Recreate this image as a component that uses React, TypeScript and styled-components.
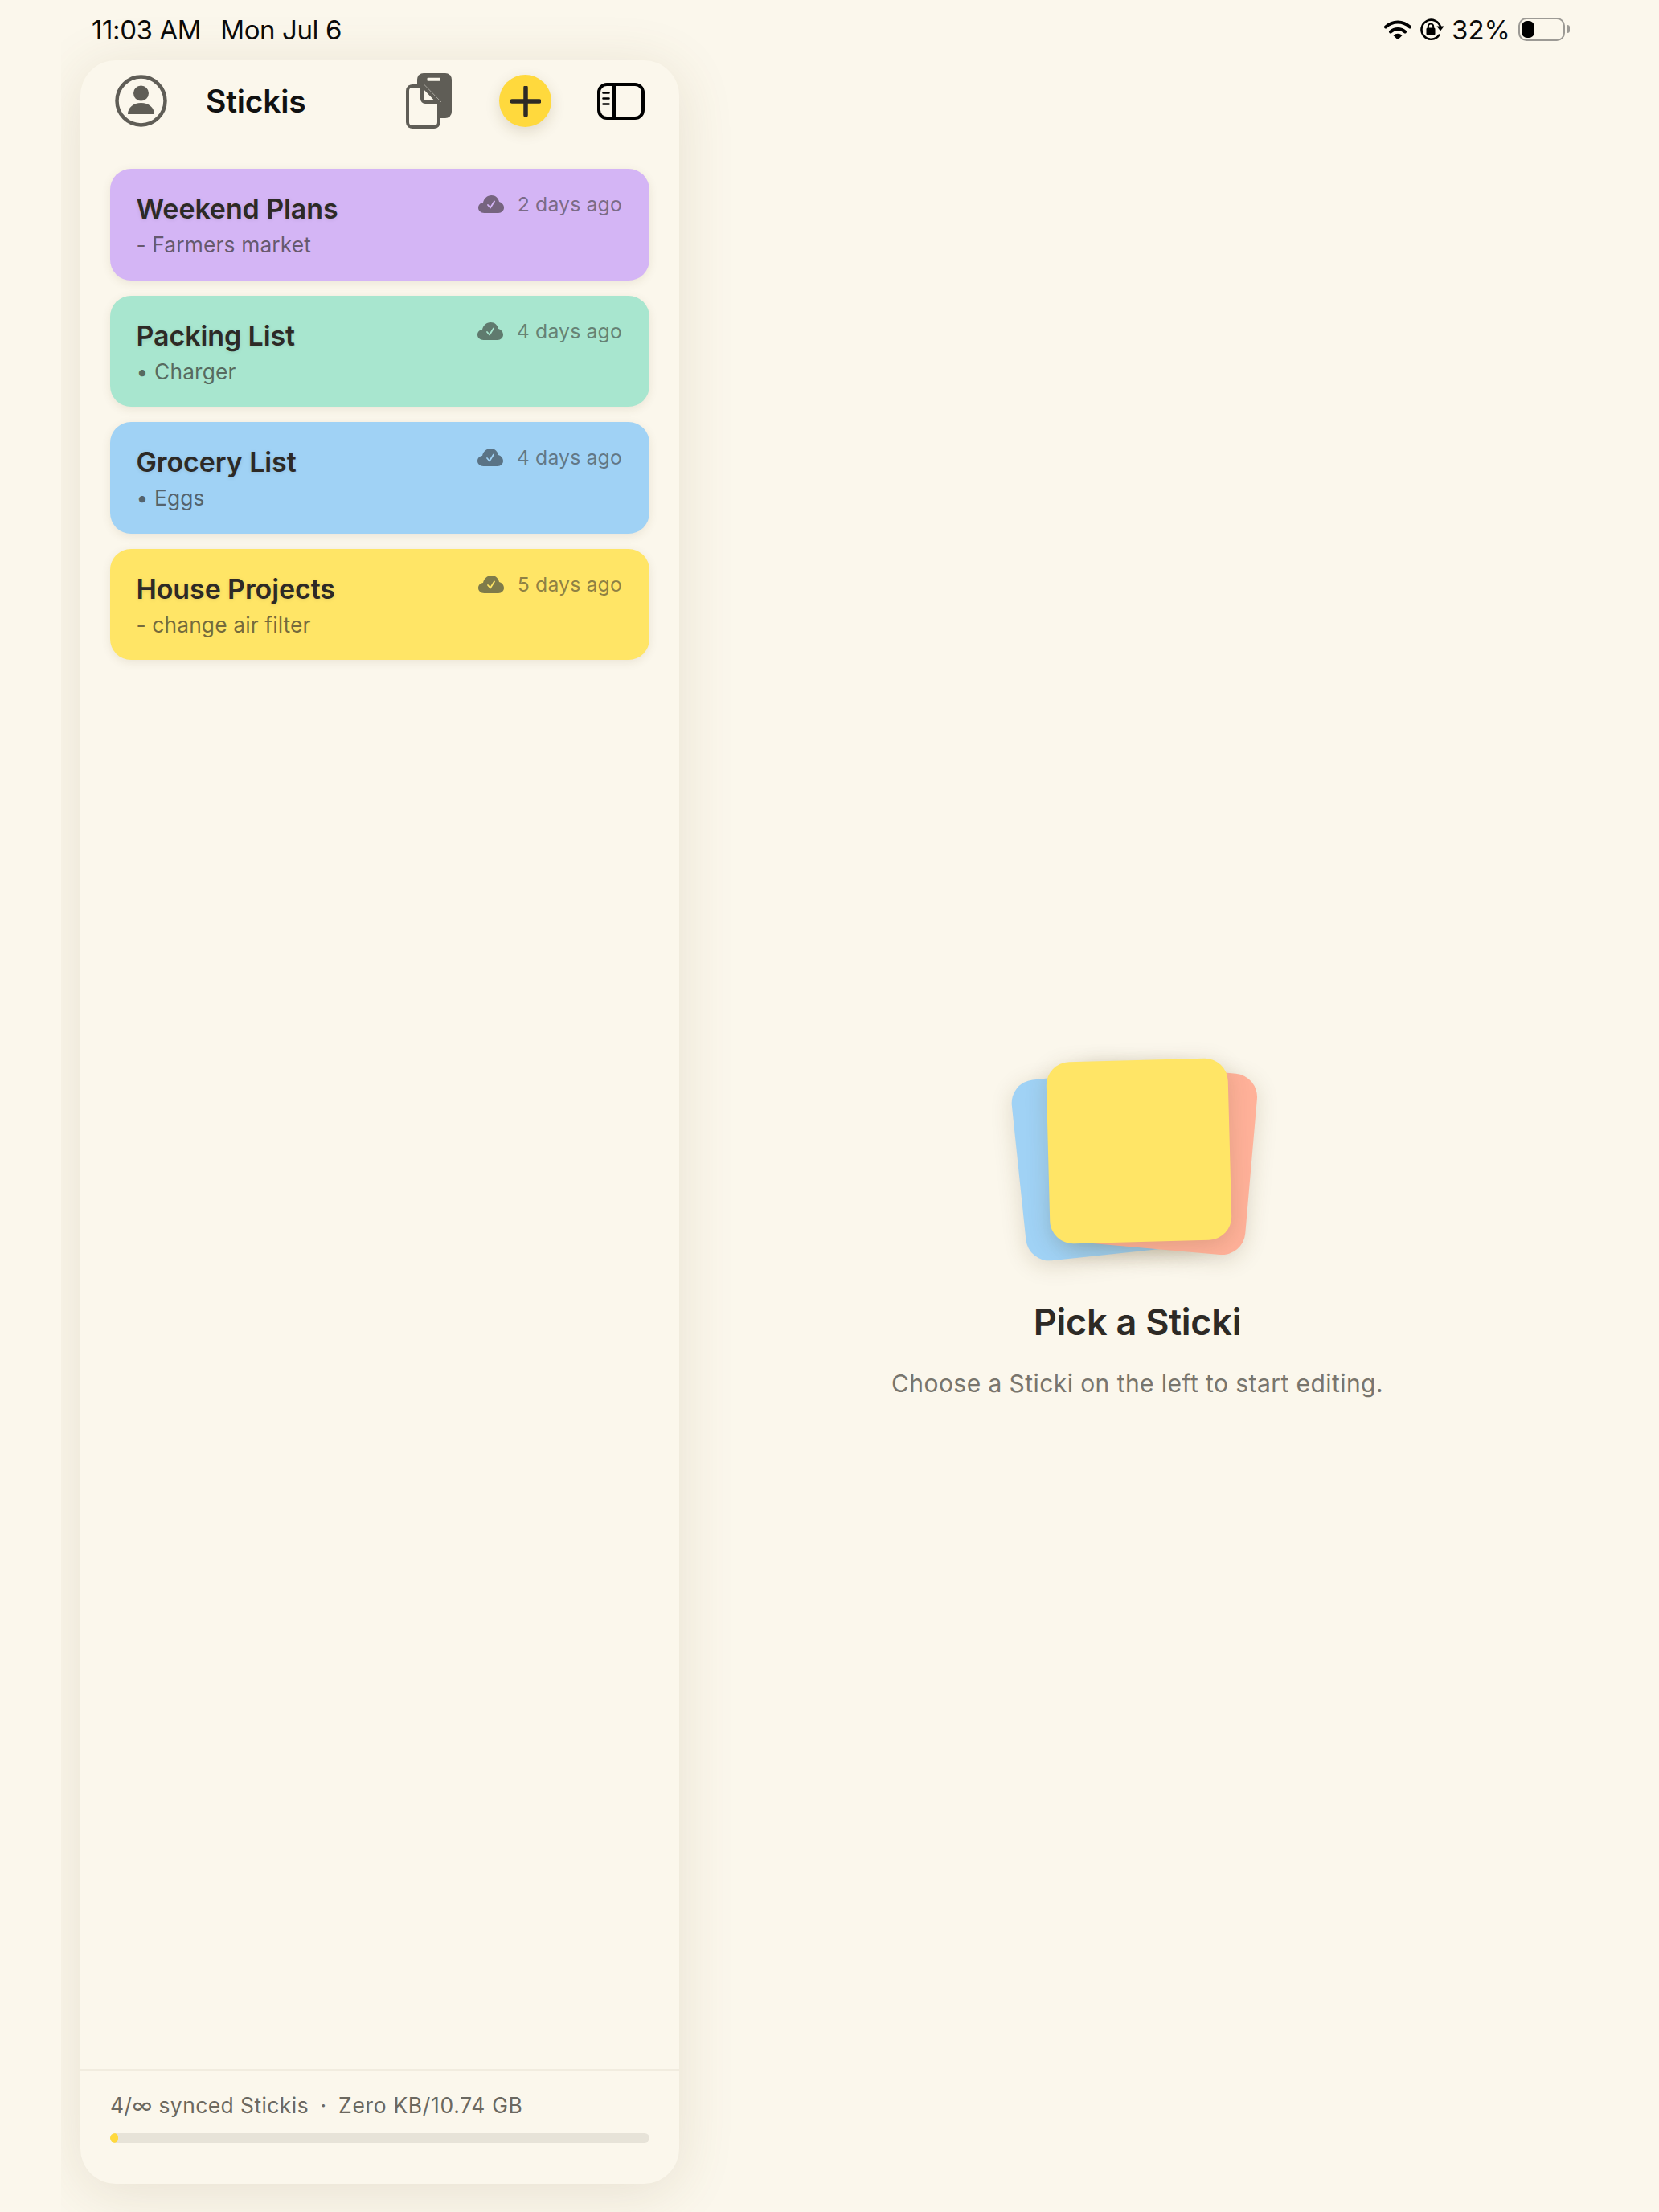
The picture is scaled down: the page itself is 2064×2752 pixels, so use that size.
import React from 'react';
import styled, { createGlobalStyle } from 'styled-components';

const GlobalStyle = createGlobalStyle`
    html, body {
        margin: 0;
        padding: 0;
        background: #fbf7ec;
    }
    * {
        box-sizing: border-box;
    }
`;

const Page = styled.div`
    width: 2064px;
    height: 2752px;
    overflow: hidden;
    background: #fbf7ec;
    font-family: Inter, 'Noto Sans', sans-serif;
    display: flex;
    flex-direction: column;
`;

const StatusBar = styled.div`
    height: 75px;
    flex: none;
    display: flex;
    align-items: center;
    padding: 0 117px 2px 114px;
    color: #0b0b0b;
    font-size: 33px;
    font-weight: 400;
`;
const StatusClock = styled.span`
    display: flex;
    gap: 24px;
    letter-spacing: -0.4px;
`;
const StatusIcons = styled.div`
    margin-left: auto;
    display: flex;
    align-items: center;
    gap: 10px;
`;
const Battery = styled.div`
    position: relative;
    width: 58px;
    height: 29px;
    border: 2.5px solid #9c9a95;
    border-radius: 10px;
    padding: 2px;
    &::after {
        content: '';
        position: absolute;
        right: -8px;
        top: 7px;
        width: 3px;
        height: 10px;
        border-radius: 0 3px 3px 0;
        background: #9c9a95;
    }
`;
const BatteryFill = styled.div`
    height: 100%;
    border-radius: 7px;
    background: #000;
`;

const Body = styled.div`
    flex: 1;
    display: flex;
    min-height: 0;
`;

const Panel = styled.aside`
    width: 745px;
    height: 2642px;
    margin-left: 100px;
    flex: none;
    display: flex;
    flex-direction: column;
    background: #fbf7ec;
    border-radius: 44px;
    box-shadow: 0 10px 70px rgba(110, 90, 40, 0.14);
    clip-path: inset(-70px -90px -60px -24px);
`;
const Header = styled.header`
    display: flex;
    align-items: center;
    height: 65px;
    margin-top: 18px;
    padding: 0 43px;
    flex: none;
`;
const AppTitle = styled.h1`
    margin: 0 0 0 48px;
    font-size: 39px;
    font-weight: 600;
    letter-spacing: -0.2px;
    color: #111;
`;
const HeaderActions = styled.div`
    margin-left: auto;
    display: flex;
    align-items: center;
    gap: 57px;
`;
const IconBox = styled.div`
    display: flex;
`;
const AddButton = styled.div`
    width: 65px;
    height: 65px;
    margin-left: 2px;
    border-radius: 50%;
    background: #ffd93d;
    box-shadow: 0 6px 18px rgba(90, 70, 20, 0.16);
    display: flex;
    align-items: center;
    justify-content: center;
`;

const StickiList = styled.div`
    flex: 1;
    display: flex;
    flex-direction: column;
    gap: 19px;
    padding: 52px 37px 0 37px;
`;
const Card = styled.div<{ $color: string }>`
    height: 138.5px;
    border-radius: 26px;
    background: ${(p) => p.$color};
    padding: 28px 34px 0 32.5px;
    box-shadow: 0 3px 12px rgba(90, 70, 30, 0.1);
    display: flex;
    justify-content: space-between;
`;
const CardText = styled.div`
    display: flex;
    flex-direction: column;
    gap: 6px;
`;
const CardTitle = styled.div`
    font-size: 34px;
    line-height: 44px;
    font-weight: 560;
    letter-spacing: -0.1px;
    color: #2d2a26;
    text-shadow: 0 1px 5px rgba(0, 0, 0, 0.1);
`;
const CardPreview = styled.div`
    font-size: 26.4px;
    line-height: 33px;
    letter-spacing: 0.12px;
    color: rgba(45, 42, 38, 0.66);
`;
const CardMeta = styled.div`
    display: flex;
    align-items: center;
    gap: 17px;
    height: 32px;
    font-size: 24.8px;
    letter-spacing: 0.15px;
    color: rgba(45, 42, 38, 0.55);
`;

const Footer = styled.footer`
    flex: none;
    height: 143px;
    border-top: 2px solid #f1ecdf;
    padding: 26px 37px 0 37px;
`;
const FooterText = styled.div`
    font-size: 26.4px;
    line-height: 34px;
    letter-spacing: 0.45px;
    color: #6b6860;
    white-space: pre;
`;
const FooterDot = styled.span`
    margin: 0 -1.25px;
`;
const FooterSize = styled.span`
    letter-spacing: 0.72px;
`;
const Track = styled.div`
    margin-top: 18px;
    height: 12px;
    border-radius: 6px;
    background: #e7e3d8;
    overflow: hidden;
`;
const TrackFill = styled.div`
    height: 100%;
    border-radius: 6px;
    background: #ffd93d;
`;

const EmptyPane = styled.main`
    width: 1140px;
    flex: none;
    display: flex;
    flex-direction: column;
    align-items: center;
    padding-top: 1225px;
`;
const Pile = styled.div`
    position: relative;
    width: 320px;
    height: 280px;
`;
const PileNote = styled.div<{ $color: string; $x: number; $y: number; $angle: number }>`
    position: absolute;
    width: 226px;
    height: 226px;
    left: ${(p) => p.$x - 113}px;
    top: ${(p) => p.$y - 113}px;
    border-radius: 29px;
    background: ${(p) => p.$color};
    transform: rotate(${(p) => p.$angle}deg);
    box-shadow: 0 6px 28px rgba(80, 60, 20, 0.17);
`;
const EmptyTitle = styled.h2`
    margin: 37px 0 0;
    font-size: 45px;
    line-height: 56px;
    font-weight: 580;
    letter-spacing: -0.25px;
    color: #2d2a26;
`;
const EmptyHint = styled.p`
    margin: 28px 0 0;
    font-size: 30px;
    line-height: 40px;
    letter-spacing: 0.43px;
    color: #78756d;
`;

const WifiIcon = () => (
    <svg width="34" height="24" viewBox="0 0 34 24">
        <path d="M2 8.500a21.500 21.500 0 0 1 30 0" fill="none" stroke="#000" strokeWidth="4" strokeLinecap="round" />
        <path d="M8 14.500a13 13 0 0 1 18 0" fill="none" stroke="#000" strokeWidth="4" strokeLinecap="round" />
        <path d="M11.500 19a8 8 0 0 1 11 0L17 24.500z" fill="#000" />
    </svg>
);

const RotationLockIcon = () => (
    <svg width="30" height="27" viewBox="0 0 30 27">
        <path d="M26.200 11a12 12 0 1 0-1.800 9.500" fill="none" stroke="#000" strokeWidth="2.600" strokeLinecap="round" />
        <path d="M21.500 9.500h9l-4.500 6z" fill="#000" />
        <rect x="8.500" y="11.500" width="11" height="9" rx="1.500" fill="#000" />
        <path d="M10.800 12V9.800a3.200 3.200 0 0 1 6.400 0V12" fill="none" stroke="#000" strokeWidth="2" />
    </svg>
);

const AvatarIcon = () => (
    <svg width="65" height="65" viewBox="0 0 65 65">
        <circle cx="32.500" cy="32.500" r="30" fill="none" stroke="#5f5d56" strokeWidth="4.500" />
        <circle cx="32.500" cy="23" r="9.500" fill="#5f5d56" />
        <path d="M16 49c0-8 7-14 16.500-14S49 41 49 49z" fill="#5f5d56" />
    </svg>
);

const CopyIcon = () => (
    <svg width="57" height="69" viewBox="0 0 57 69">
        <rect x="14" y="0" width="43" height="56" rx="8" fill="#5f5d56" />
        <rect x="26.500" y="5.700" width="16.500" height="4" rx="1" fill="#fbf7ec" />
        <path d="M21 16H8a6 6 0 0 0-6 6v39a6 6 0 0 0 6 6h27a6 6 0 0 0 6-6V37z" fill="#fbf7ec" stroke="#5f5d56" strokeWidth="4" strokeLinejoin="round" />
        <path d="M20 17v15a4 4 0 0 0 4 4h16" fill="none" stroke="#5f5d56" strokeWidth="4" />
        <path d="M22 13.500l22 22.500" fill="none" stroke="#a9a79f" strokeWidth="1" />
    </svg>
);

const PlusIcon = () => (
    <svg width="38" height="38" viewBox="0 0 38 38">
        <path d="M19 2v34M2 19h34" fill="none" stroke="#2d2a26" strokeWidth="5.500" strokeLinecap="round" />
    </svg>
);

const SidebarIcon = () => (
    <svg width="59" height="46" viewBox="0 0 59 46">
        <rect x="2" y="2" width="55" height="42" rx="10" fill="none" stroke="#000" strokeWidth="4" />
        <path d="M21 2v42" stroke="#000" strokeWidth="4" />
        <path d="M7.500 12.500h7M7.500 19.500h7M7.500 26.500h7" stroke="#000" strokeWidth="2.600" strokeLinecap="round" />
    </svg>
);

const SyncedIcon = ({ tint, check }: { tint: string; check: string }) => (
    <svg width="32" height="22" viewBox="0 0 32 22">
        <path
            d="M7.500 22C3 22 0 19 0 15.500 0 12 2.600 9.400 6 9 7 4 11 0 16.500 0 21.500 0 25 3.500 26 8c3.500 1 6 4 6 7.500 0 3.500-3 6.500-7 6.500z"
            fill={tint}
        />
        <path d="M12 12l3 3.500L20 7.500" fill="none" stroke={check} strokeWidth="1.800" strokeLinecap="round" strokeLinejoin="round" />
    </svg>
);

type Sticki = {
    title: string;
    preview: string;
    age: string;
    color: string;
    tint: string;
};

const stickis: Sticki[] = [
    { title: 'Weekend Plans', preview: '- Farmers market', age: '2 days ago', color: '#d4b5f5', tint: '#76647f' },
    { title: 'Packing List', preview: '• Charger', age: '4 days ago', color: '#a8e6cf', tint: '#5f7a6e' },
    { title: 'Grocery List', preview: '• Eggs', age: '4 days ago', color: '#a0d2f5', tint: '#5a7385' },
    { title: 'House Projects', preview: '- change air filter', age: '5 days ago', color: '#ffe566', tint: '#7f7b4a' },
];

const App: React.FC = () => (
    <Page>
        <GlobalStyle />
        <StatusBar>
            <StatusClock>
                <span>11:03 AM</span>
                <span>Mon Jul 6</span>
            </StatusClock>
            <StatusIcons>
                <WifiIcon />
                <RotationLockIcon />
                <span>32%</span>
                <Battery>
                    <BatteryFill style={{ width: '32%' }} />
                </Battery>
            </StatusIcons>
        </StatusBar>
        <Body>
            <Panel>
                <Header>
                    <AvatarIcon />
                    <AppTitle>Stickis</AppTitle>
                    <HeaderActions>
                        <IconBox>
                            <CopyIcon />
                        </IconBox>
                        <AddButton>
                            <PlusIcon />
                        </AddButton>
                        <IconBox>
                            <SidebarIcon />
                        </IconBox>
                    </HeaderActions>
                </Header>
                <StickiList>
                    {stickis.map((s) => (
                        <Card key={s.title} $color={s.color}>
                            <CardText>
                                <CardTitle>{s.title}</CardTitle>
                                <CardPreview>{s.preview}</CardPreview>
                            </CardText>
                            <CardMeta>
                                <SyncedIcon tint={s.tint} check={s.color} />
                                <span>{s.age}</span>
                            </CardMeta>
                        </Card>
                    ))}
                </StickiList>
                <Footer>
                    <FooterText>
                        4/∞ synced Stickis  <FooterDot>·</FooterDot>  <FooterSize>Zero KB/10.74 GB</FooterSize>
                    </FooterText>
                    <Track>
                        <TrackFill style={{ width: '10px' }} />
                    </Track>
                </Footer>
            </Panel>
            <EmptyPane>
                <Pile>
                    <PileNote $color="#a0d2f5" $x={124.7} $y={146.7} $angle={-6} />
                    <PileNote $color="#ffb199" $x={188.7} $y={140.8} $angle={5} />
                    <PileNote $color="#ffe566" $x={161.7} $y={131.8} $angle={-1.5} />
                </Pile>
                <EmptyTitle>Pick a Sticki</EmptyTitle>
                <EmptyHint>Choose a Sticki on the left to start editing.</EmptyHint>
            </EmptyPane>
        </Body>
    </Page>
);

export default App;
